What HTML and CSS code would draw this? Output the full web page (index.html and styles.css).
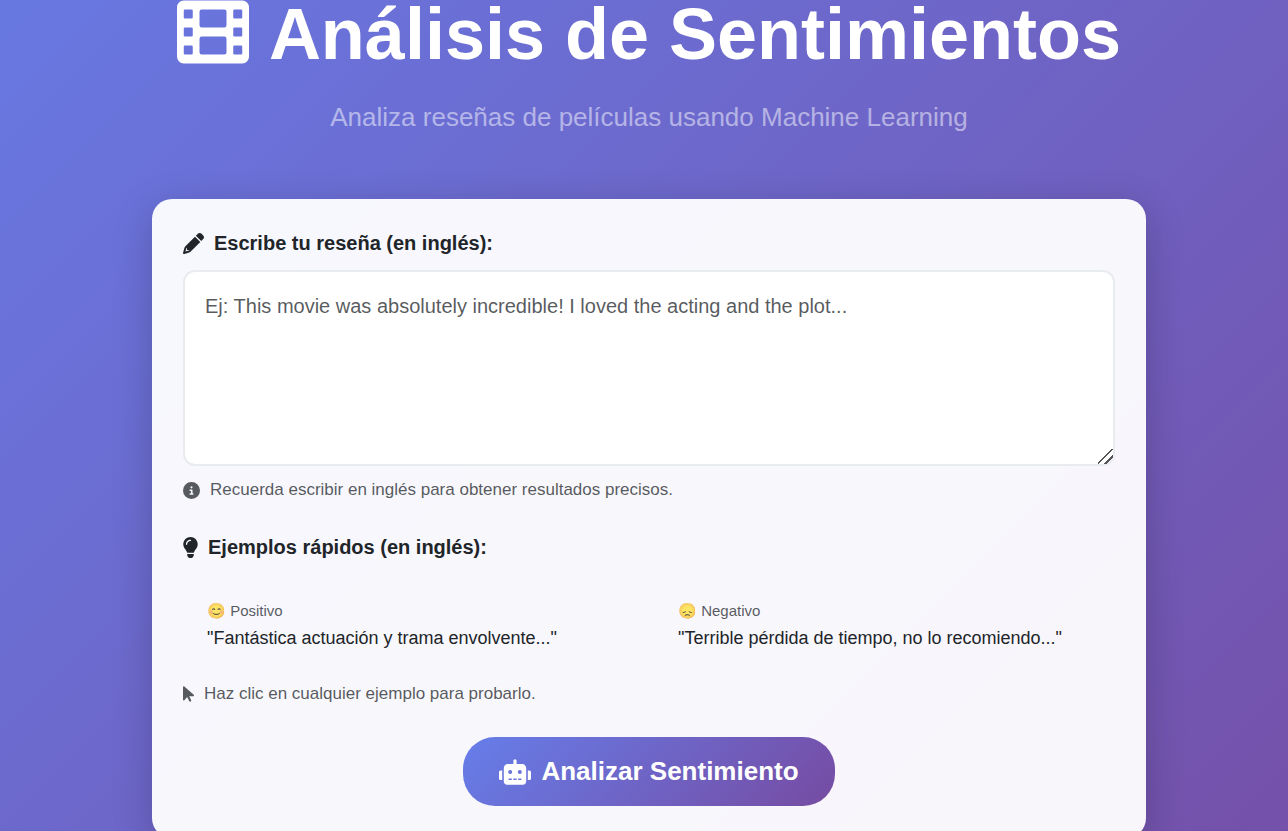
FILE: index.html
```html
<!DOCTYPE html>
<html lang="es">
<head>
<meta charset="utf-8">
<meta name="viewport" content="width=device-width, initial-scale=1">
<title>Análisis de Sentimientos</title>
<link rel="stylesheet" href="styles.css">
</head>
<body>
<main class="page">
  <header class="hero">
    <h1 class="hero-title">
      <svg class="icon icon-film" viewBox="0 32 512 448" aria-hidden="true"><path fill="currentColor" fill-rule="evenodd" d="M48 32H464a48 48 0 0 1 48 48V432a48 48 0 0 1-48 48H48a48 48 0 0 1-48-48V80A48 48 0 0 1 48 32zM56 96h48q8 0 8 8v48q0 8-8 8H56q-8 0-8-8v-48q0-8 8-8zM56 224h48q8 0 8 8v48q0 8-8 8H56q-8 0-8-8v-48q0-8 8-8zM56 352h48q8 0 8 8v48q0 8-8 8H56q-8 0-8-8v-48q0-8 8-8zM408 96h48q8 0 8 8v48q0 8-8 8h-48q-8 0-8-8v-48q0-8 8-8zM408 224h48q8 0 8 8v48q0 8-8 8h-48q-8 0-8-8v-48q0-8 8-8zM408 352h48q8 0 8 8v48q0 8-8 8h-48q-8 0-8-8v-48q0-8 8-8zM176 96h160q16 0 16 16v96q0 16-16 16H176q-16 0-16-16v-96q0-16 16-16zM176 288h160q16 0 16 16v96q0 16-16 16H176q-16 0-16-16v-96q0-16 16-16z"/></svg>
      <span>Análisis de Sentimientos</span>
    </h1>
    <p class="hero-subtitle">Analiza reseñas de películas usando Machine Learning</p>
  </header>

  <form class="card">
    <label class="label" for="review">
      <svg class="icon icon-pencil" viewBox="0 0 512 512" aria-hidden="true"><path fill="currentColor" d="M421.700 220.300L188.500 453.400 154.600 419.500 158.100 416H112C103.200 416 96 408.800 96 400V353.900L92.510 357.400C87.780 362.200 84.310 368 82.420 374.400L59.440 452.600 137.600 429.600C143.100 427.900 149.800 424.200 154.600 419.500L188.500 453.400C178.100 463.800 165.200 471.500 151.100 475.600L30.770 511C22.350 513.500 13.240 511.200 7.030 504.100C.817 498.700-1.492 489.700.984 481.200L36.370 360.900C40.530 346.800 48.160 333.900 58.570 323.500L291.700 90.340 421.700 220.300zM492.700 58.750C517.700 83.740 517.700 124.300 492.700 149.300L444.300 197.700 314.300 67.720 362.700 19.320C387.700-5.678 428.300-5.678 453.300 19.320L492.700 58.750z"/></svg>
      Escribe tu reseña (en inglés):
    </label>
    <textarea class="review" id="review" placeholder="Ej: This movie was absolutely incredible! I loved the acting and the plot..."></textarea>
    <p class="hint">
      <svg class="icon icon-info" viewBox="0 0 512 512" aria-hidden="true"><path fill="currentColor" fill-rule="evenodd" d="M256 512A256 256 0 1 0 256 0a256 256 0 1 0 0 512zM216 336h24V272H216c-13.3 0-24-10.7-24-24s10.7-24 24-24h48c13.3 0 24 10.7 24 24v88h8c13.3 0 24 10.7 24 24s-10.7 24-24 24H216c-13.3 0-24-10.7-24-24s10.7-24 24-24zm40-208a32 32 0 1 1 0 64 32 32 0 1 1 0-64z"/></svg>
      Recuerda escribir en inglés para obtener resultados precisos.
    </p>

    <h2 class="label label-examples">
      <svg class="icon icon-bulb" viewBox="0 0 352 512" aria-hidden="true"><path fill="currentColor" fill-rule="evenodd" d="M176 0C79 0 0 79 0 176c0 44 17 85 44 116 16 19 42 57 52 92h160c10-35 36-73 52-92 27-31 44-72 44-116C352 79 273 0 176 0zm0 96c-44 0-80 36-80 80 0 9-7 16-16 16s-16-7-16-16c0-62 50-112 112-112 9 0 16 7 16 16s-7 16-16 16zM96 416h160v38l-20 36q-14 22-38 22h-44q-24 0-38-22l-20-36z"/></svg>
      Ejemplos rápidos (en inglés):
    </h2>
    <div class="examples">
      <button class="example" type="button">
        <span class="example-kind">😊 Positivo</span>
        <span class="example-text">"Fantástica actuación y trama envolvente..."</span>
      </button>
      <button class="example" type="button">
        <span class="example-kind">😞 Negativo</span>
        <span class="example-text">"Terrible pérdida de tiempo, no lo recomiendo..."</span>
      </button>
    </div>
    <p class="hint">
      <svg class="icon icon-pointer" viewBox="0 32 320 448" aria-hidden="true"><path fill="currentColor" d="M0 55.2V426c0 12.2 9.9 22 22 22 6.3 0 12.4-2.7 16.6-7.5L121.2 346l58.1 116.3c7.9 15.8 27.1 22.2 42.9 14.3s22.2-27.1 14.3-42.9L179.8 320H297.9c12.2 0 22.1-9.9 22.1-22.1 0-6.3-2.7-12.3-7.4-16.5L38.6 37.9C34.3 34.1 28.900 32 23.200 32 10.400 32 0 42.400 0 55.200z"/></svg>
      Haz clic en cualquier ejemplo para probarlo.
    </p>

    <button class="submit" type="button">
      <svg class="icon icon-robot" viewBox="0 0 640 512" aria-hidden="true"><path fill="currentColor" fill-rule="evenodd" d="M32 224h32v192H32c-17.600 0-32-14.400-32-32V256c0-17.600 14.400-32 32-32zM608 224h-32v192h32c17.600 0 32-14.400 32-32V256c0-17.600-14.400-32-32-32zM464 96H352V32c0-17.600-14.400-32-32-32s-32 14.400-32 32v64H176c-44.200 0-80 35.800-80 80v272c0 35.400 28.600 64 64 64h320c35.400 0 64-28.600 64-64V176c0-44.200-35.800-80-80-80zM256 416h-64v-32h64zM264 256a40 40 0 1 0-80 0 40 40 0 1 0 80 0zM352 416h-64v-32h64zM448 416h-64v-32h64zM456 256a40 40 0 1 0-80 0 40 40 0 1 0 80 0z"/></svg>
      Analizar Sentimiento
    </button>
  </form>
</main>
</body>
</html>
```
FILE: styles.css
```css
* {
  box-sizing: border-box;
}

body {
  margin: 0;
  font-family: "Liberation Sans", Arial, sans-serif;
  color: #212529;
}

.page {
  height: 100vh;
  overflow: hidden;
  padding-left: 10px;
  background: linear-gradient(135deg, #667eea -15%, #764ba2 115%);
}

.icon {
  display: block;
  flex: none;
}

.hero {
  display: flex;
  flex-direction: column;
  align-items: center;
  gap: 30px;
  padding-bottom: 63px;
  color: #fff;
}

.hero-title {
  display: flex;
  align-items: flex-start;
  gap: 20px;
  margin: 0;
  font-size: 72px;
  line-height: 68px;
}

.icon-film {
  width: 72px;
  height: 64px;
}

.hero-subtitle {
  margin: 0;
  font-size: 26px;
  line-height: 38px;
  color: rgba(255, 255, 255, 0.5);
}

.card {
  max-width: 994px;
  margin: 0 auto;
  padding: 26px 31px 32px;
  border-radius: 20px;
  background: rgba(255, 255, 255, 0.95);
  box-shadow: 0 10px 40px rgba(0, 0, 0, 0.2);
}

.label {
  display: flex;
  align-items: center;
  gap: 10px;
  margin: 0;
  font-size: 20px;
  font-weight: 700;
  line-height: 36px;
}

.icon-pencil {
  width: 21px;
  height: 21px;
}

.review {
  display: block;
  width: 100%;
  height: 196px;
  margin: 9px 0 10px;
  padding: 18px 20px;
  border: 2px solid #e9ecef;
  border-radius: 12px;
  background: #fff;
  font: 20px/32px "Liberation Sans", Arial, sans-serif;
  color: #212529;
  resize: vertical;
}

.review::placeholder {
  color: rgba(33, 37, 41, 0.75);
}

.review::-webkit-resizer {
  background: linear-gradient(135deg, transparent 46%, #555 46%, #555 53%, transparent 53%, transparent 70%, #555 70%, #555 77%, transparent 77%);
}

.hint {
  display: flex;
  align-items: center;
  gap: 10px;
  margin: 0;
  font-size: 17px;
  line-height: 28px;
  color: rgba(33, 37, 41, 0.75);
}

.icon-info {
  width: 17px;
  height: 17px;
}

.label-examples {
  margin-top: 25px;
}

.icon-bulb {
  width: 15px;
  height: 21px;
}

.examples {
  display: grid;
  grid-template-columns: 1fr 1fr;
  gap: 10px;
  margin: 14px 0 7px;
}

.example {
  display: flex;
  flex-direction: column;
  align-items: flex-start;
  padding: 20px 24px;
  border: 0;
  background: transparent;
  font-family: inherit;
  color: #212529;
  text-align: left;
  cursor: pointer;
}

.example-kind {
  font-size: 15px;
  line-height: 24px;
  color: rgba(33, 37, 41, 0.75);
}

.example-text {
  font-size: 18px;
  line-height: 30px;
}

.icon-pointer {
  width: 11px;
  height: 16px;
}

.submit {
  display: flex;
  align-items: center;
  justify-content: center;
  gap: 10px;
  margin: 29px auto 0;
  padding: 15px 36px;
  border: 0;
  border-radius: 32px;
  background: linear-gradient(135deg, #667eea 0%, #764ba2 100%);
  font: 700 26px/39px "Liberation Sans", Arial, sans-serif;
  color: #fff;
  cursor: pointer;
}

.icon-robot {
  width: 32px;
  height: 26px;
}
```
